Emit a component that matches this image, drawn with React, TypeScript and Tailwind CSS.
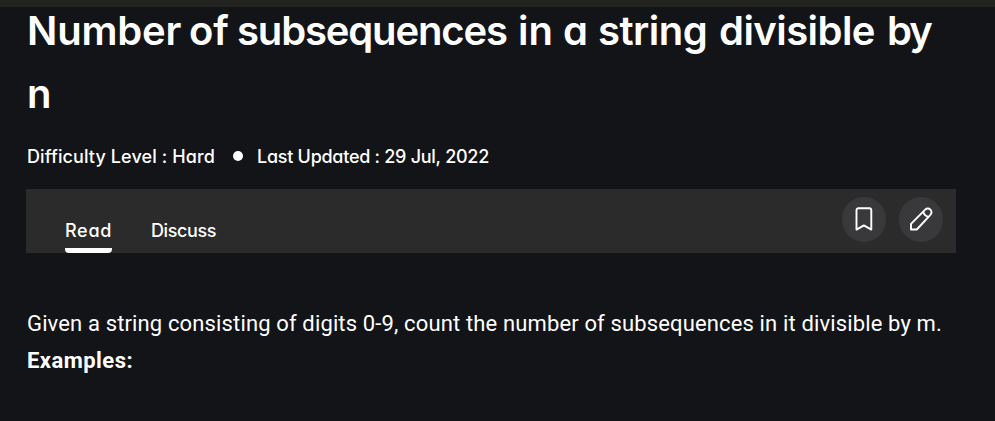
import React from "react";

function BookmarkIcon() {
  return (
    <svg width="18" height="24" viewBox="0 0 18 24" fill="none" stroke="#fff" strokeWidth="1.9" strokeLinejoin="round">
      <path d="M1.5 22.6V3.2a2 2 0 0 1 2-2h10.8a2 2 0 0 1 2 2v19.4L8.9 18.4z" />
    </svg>
  );
}

function PencilIcon() {
  return (
    <svg width="24" height="24" viewBox="0 0 24 24" fill="none" stroke="#fff" strokeWidth="1.9" strokeLinejoin="round">
      <path d="M2 22.5v-5.7L16.2 2.6a3.6 3.6 0 0 1 5.2 0 3.6 3.6 0 0 1 0 5.2L7.8 22.5z" />
      <path d="M14.2 4.4c.5 2.8 2 4.6 5.1 5.4" />
    </svg>
  );
}

const titleWords = [
  { text: "Number", style: "w-[162px] tracking-[-0.2px]" },
  { text: "of", style: "w-[48px]" },
  { text: "subsequences", style: "w-[281px] tracking-[-1.15px]" },
  { text: "in", style: "w-[45px]" },
  { text: "a", style: "w-[35px]" },
  { text: "string", style: "w-[121px] tracking-[-0.5px]" },
  { text: "divisible", style: "w-[168px] tracking-[-0.55px]" },
  { text: "by", style: "tracking-[-2px]" },
];

export default function App() {
  return (
    <div className="h-[421px] w-[995px] overflow-hidden bg-[#131418] text-white font-['Inter',sans-serif] [font-feature-settings:'cv11']">
      <div className="h-[7px] bg-[#22221f]" />
      <main className="pl-[27px]">
        <h1 className="-mt-[8px] h-[133px] whitespace-nowrap text-[40px] font-semibold leading-[63px]">
          <span className="flex">
            {titleWords.map((word) => (
              <span key={word.text} className={word.style}>
                {word.text}{" "}
              </span>
            ))}
          </span>
          n
        </h1>
        <div className="mt-[11px] flex h-[26px] items-center whitespace-nowrap text-[18px] font-medium">
          <span className="w-[206px] tracking-[0.1px]">Difficulty Level : Hard</span>
          <span className="mr-[14px] size-[10px] rounded-full bg-white" />
          <span className="tracking-[-0.27px]">Last Updated : 29 Jul, 2022</span>
        </div>
        <div className="-ml-px mt-[20px] flex h-[64px] w-[930px] justify-between bg-[#2b2b2b] pl-[39px] pr-[13px] text-[18px] font-medium">
          <nav className="flex gap-[39px]">
            <div className="flex w-[47px] flex-col justify-between whitespace-nowrap pt-[28px]">
              <span className="leading-[27px] tracking-[0.7px]">Read</span>
              <span className="h-[5px] rounded-b-[4px] bg-white" />
            </div>
            <span className="pt-[28px] leading-[27px] tracking-[-0.4px]">Discuss</span>
          </nav>
          <div className="flex gap-[13px] pt-[8px]">
            <button className="flex h-[45px] w-[44px] items-center justify-center rounded-full bg-[#39393b] pb-[2px]">
              <BookmarkIcon />
            </button>
            <button className="flex h-[45px] w-[44px] items-center justify-center rounded-full bg-[#39393b] pb-[2px]">
              <PencilIcon />
            </button>
          </div>
        </div>
        <div className="mt-[52px] whitespace-nowrap font-['Roboto',sans-serif] text-[22px] leading-[37px]">
          <p className="tracking-[0.14px]">Given a string consisting of digits 0-9, count the number of subsequences in it divisible by m.</p>
          <p className="font-bold tracking-[0.45px]">Examples:</p>
        </div>
      </main>
    </div>
  );
}
